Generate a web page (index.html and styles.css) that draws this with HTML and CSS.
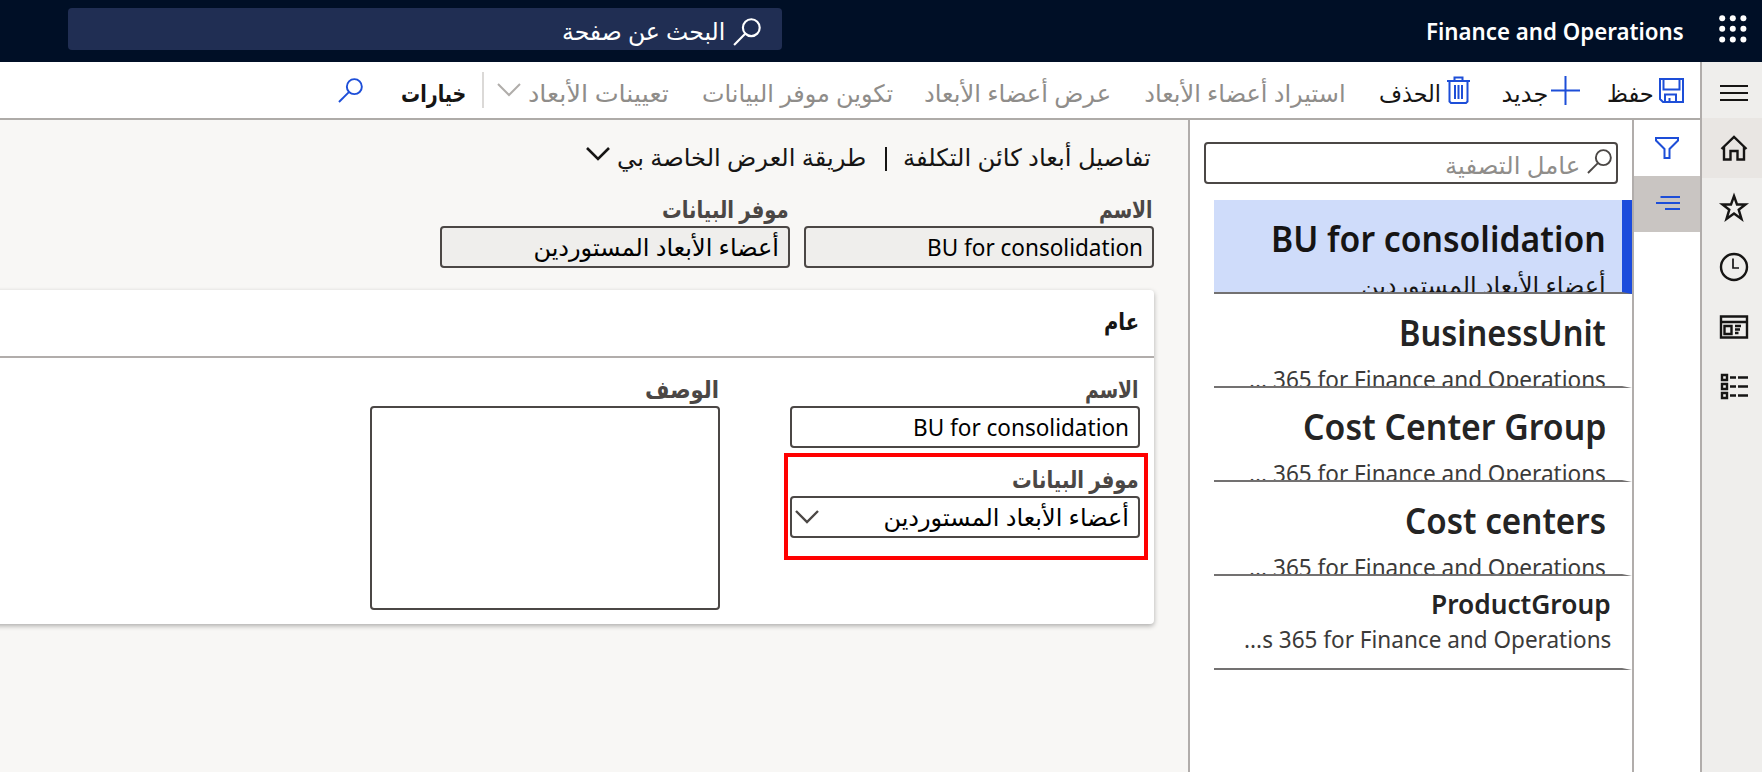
FILE: index.html
```
<!DOCTYPE html>
<html lang="ar" dir="rtl">
<head>
<meta charset="utf-8">
<title>Finance and Operations</title>
<link rel="stylesheet" href="styles.css">
</head>
<body>
<svg width="0" height="0" class="defs">
  <symbol id="search" viewBox="0 0 26 26"><circle cx="17" cy="9" r="7.8"/><path d="M11.3 14.7 1 25"/></symbol>
  <symbol id="chevron" viewBox="0 0 24 14"><path d="m1 1 11 11L23 1"/></symbol>
</svg>
<header class="topbar">
  <svg class="waffle" viewBox="0 0 28 28"><circle cx="3.2" cy="3.2" r="3"/><circle cx="13.8" cy="3.2" r="3"/><circle cx="24.4" cy="3.2" r="3"/><circle cx="3.2" cy="13.8" r="3"/><circle cx="13.8" cy="13.8" r="3"/><circle cx="24.4" cy="13.8" r="3"/><circle cx="3.2" cy="24.4" r="3"/><circle cx="13.8" cy="24.4" r="3"/><circle cx="24.4" cy="24.4" r="3"/></svg>
  <span class="brand" dir="ltr" data-fit="258">Finance and Operations</span>
  <div class="page-search"><svg class="ico s28"><use href="#search"/></svg><span data-fit="163">البحث عن صفحة</span></div>
</header>
<div class="shell">
  <nav class="rail">
    <div class="cell menu"><svg width="28" height="18" viewBox="0 0 28 18"><path d="M0 2h28M0 9h28M0 16h28"/></svg></div>
    <div class="cell home"><svg width="28" height="26" viewBox="0 0 28 26"><path d="M1.5 14 14 2l12.500 12M4 12v12.500h6.500V16h7v8.500H24V12"/></svg></div>
    <div class="cell"><svg width="28" height="29" viewBox="0 0 28 29"><path d="m14 3 3 8.500h8.500l-6.800 5.200L21.500 26 14 20.500 6.500 26l2.800-9.300L2.500 11.500H11z"/></svg></div>
    <div class="cell"><svg width="30" height="30" viewBox="0 0 30 30"><circle cx="15" cy="15" r="13"/><path class="thin" d="M14 6.500V16h6"/></svg></div>
    <div class="cell"><svg width="30" height="24" viewBox="0 0 30 24"><path d="M2 1.500h26v21H2zM2 7h26M5.500 11h7v8h-7zM16 11h6M16 14.500h5M16 18h3.500"/></svg></div>
    <div class="cell"><svg width="28" height="27" viewBox="0 0 28 27"><path d="M2 2h5v5H2zM2 11h5v5H2zM2 20h5v5H2zM10 4.500h6M18 4.500h10M10 13.500h6M18 13.500h10M10 22.500h6M18 22.500h10"/></svg></div>
  </nav>
  <div class="work">
    <div class="toolbar">
      <svg class="blue disk" width="25" height="25" viewBox="0 0 25 25"><path d="M1 1h23v23H4l-3-3zM4.500 1v10.500h16V1M6 24v-7.500h11V24M10.500 24v-4"/></svg>
      <span class="t-save" data-fit="47">حفظ</span>
      <svg class="blue plus" width="29" height="29" viewBox="0 0 29 29"><path d="M14.500 0v29M0 14.500h29"/></svg>
      <span class="t-new" data-fit="47">جديد</span>
      <svg class="blue trash" width="23" height="28" viewBox="0 0 23 28"><path d="M0 5h23M7.500 4V1.500h8V4M2.500 5v20.500l1.500 1.500h15l1.500-1.500V5M8 9v14M11.500 9v14M15 9v14"/></svg>
      <span class="t-del" data-fit="62">الحذف</span>
      <span class="off t-imp" data-fit="201">استيراد أعضاء الأبعاد</span>
      <span class="off t-view" data-fit="187">عرض أعضاء الأبعاد</span>
      <span class="off t-conf" data-fit="191">تكوين موفر البيانات</span>
      <span class="off t-map" data-fit="141">تعيينات الأبعاد</span>
      <svg class="chev off-chev"><use href="#chevron"/></svg>
      <i class="sep"></i>
      <span class="bold" data-fit="65">خيارات</span>
      <svg class="ico blue find"><use href="#search"/></svg>
    </div>
    <div class="body">
      <div class="tabs">
        <div class="tab"><svg class="blue" width="24" height="22" viewBox="0 0 24 22"><path d="M1 1h22v2.500L14.500 12v9h-5v-9L1 3.500z"/></svg></div>
        <div class="tab on"><svg class="blue" width="24" height="14" viewBox="0 0 24 14"><path d="M4.500 1H24M0 7h24M9 13h15"/></svg></div>
      </div>
      <aside class="panel">
        <div class="filter"><svg class="ico"><use href="#search"/></svg><span data-fit="135">عامل التصفية</span></div>
        <ul class="items">
          <li class="sel"><b dir="ltr" data-fit="335">BU for consolidation</b><span data-fit="245">أعضاء الأبعاد المستوردين</span></li>
          <li><b dir="ltr" data-fit="207">BusinessUnit</b><span dir="ltr" data-fit="357">... 365 for Finance and Operations</span></li>
          <li><b dir="ltr" data-fit="303">Cost Center Group</b><span dir="ltr" data-fit="357">... 365 for Finance and Operations</span></li>
          <li><b dir="ltr" data-fit="201">Cost centers</b><span dir="ltr" data-fit="357">... 365 for Finance and Operations</span></li>
          <li class="small"><b dir="ltr" data-fit="180">ProductGroup</b><span dir="ltr" data-fit="367">...s 365 for Finance and Operations</span></li>
        </ul>
      </aside>
      <main class="main">
        <div class="title"><span data-fit="248">تفاصيل أبعاد كائن التكلفة</span><i></i><span data-fit="249">طريقة العرض الخاصة بي</span><svg class="chev"><use href="#chevron"/></svg></div>
        <div class="head-fields">
          <div class="field"><label><span data-fit="54">الاسم</span></label><div class="box ro"><span dir="ltr" data-fit="216">BU for consolidation</span></div></div>
          <div class="field"><label><span data-fit="127">موفر البيانات</span></label><div class="box ro"><span data-fit="246">أعضاء الأبعاد المستوردين</span></div></div>
        </div>
        <section class="card">
          <h2><span data-fit="35">عام</span></h2>
          <div class="cols">
            <div class="col">
              <div class="field"><label><span data-fit="54">الاسم</span></label><div class="box"><span dir="ltr" data-fit="216">BU for consolidation</span></div></div>
              <div class="field marked"><label><span data-fit="127">موفر البيانات</span></label><div class="box combo"><span data-fit="246">أعضاء الأبعاد المستوردين</span><svg class="chev"><use href="#chevron"/></svg></div></div>
            </div>
            <div class="field"><label><span data-fit="74">الوصف</span></label><div class="box area"></div></div>
          </div>
        </section>
      </main>
    </div>
  </div>
</div>
<script src="main.js"></script>
</body>
</html>
```
FILE: styles.css
```
*{box-sizing:border-box}
body{margin:0;width:1762px;height:772px;overflow:hidden;font:24px/36px "Noto Sans","DejaVu Sans",sans-serif;color:#161514;background:#fff;display:flex;flex-direction:column}
svg{flex:none;fill:none;stroke:currentColor;stroke-width:2;overflow:visible}
.defs{position:absolute}
[data-fit]{display:inline-block;white-space:nowrap;flex:none;transform-origin:100% 50%}
.blue{color:#1d4ed8}
.ico{width:26px;height:26px}
.chev{width:24px;height:14px}

.topbar{height:62px;flex:none;background:#000f26;color:#fff;display:flex;align-items:flex-start;padding:8px 15px 0 0}
.waffle{width:28px;height:28px;fill:#fff;stroke:none;margin:7px 0 0 35px}
.brand{font-weight:600;margin-top:5px}
.page-search{width:714px;height:42px;border-radius:4px;background:#202e53;margin:0 auto 0 68px;display:flex;align-items:center;gap:8px;padding-right:21px}
.page-search span{margin-top:3px}
.page-search .s28{width:28px;height:28px;margin-top:5px}

.shell{flex:1;display:flex;min-height:0}
.rail{width:62px;flex:none;background:#efeeec;border-left:2px solid #b1adab}
.cell{height:59.700px;display:flex;align-items:center;justify-content:center;padding-left:4px}
.cell svg{stroke-width:2.400}
.cell .thin{stroke-width:1.700}
.menu{height:56px;padding-top:6px}
.menu svg{stroke-width:1.800}
.home{background:#e9e6e3}
.work{flex:1;min-width:0;display:flex;flex-direction:column}
.toolbar{height:58px;flex:none;border-bottom:2px solid #aeaba8;display:flex;align-items:center;padding-right:16px}
.toolbar [data-fit]{margin-top:5px}
.t-save{margin-right:5px}
.plus{margin-right:27px}
.t-new{margin-right:3px}
.trash{margin-right:32px}
.t-del{margin-right:6px}
.t-imp{margin-right:33px}
.t-view{margin-right:33px}
.t-conf{margin-right:31px}
.t-map{margin-right:33px}
.off{color:#8f8d8a}
.off-chev{color:#b0adaa;margin-right:7px}
.sep{width:2px;height:36px;background:#dbd9d7;margin:0 13px 0 16px}
.bold{font-weight:700}
.find{margin-right:38px;width:25px;height:25px}

.body{flex:1;display:flex;min-height:0}
.tabs{width:68px;flex:none;border-left:2px solid #b1adab}
.tab{height:56px;display:flex;align-items:center;justify-content:center}
.tab.on{background:#c9c5c2;padding:0 0 2px 2px}
.panel{width:444px;flex:none;border-left:2px solid #b1adab;padding:22px 0 0}
.filter{height:42px;width:414px;margin:0 14px 16px;border:2px solid #4b4745;border-radius:4px;display:flex;align-items:center;gap:7px;padding:0 4px;color:#8f8d8a}
.filter .ico{color:#4b4745;width:25px;height:25px;margin-bottom:4px}
.filter span{margin-top:3px}
.items{list-style:none;margin:0 0 0 24px;padding:0}
.items li{height:94px;border-bottom:2px solid #737171;border-right:10px solid transparent;overflow:hidden;display:flex;flex-direction:column;align-items:flex-start;padding:14px 16px 0 0;color:#3b3a39}
.items b{font-size:36px;line-height:50px;font-weight:600;color:#242424}
.items span{line-height:36px;margin-top:3px}
.items .sel{background:#cfdcfa;border-right-color:#1c4cdc;color:#161514}
.items .sel b{color:#161514}
.items .small{padding:10px 11px 0 0}
.items .small b{font-size:27px;line-height:36px}
.items .small span{margin-top:-1px}

.main{flex:1;min-width:0;background:#f8f7f5;padding:19px 34px 0 0}
.title{display:flex;height:36px;padding-right:3px;align-items:center}
.title i{width:2px;height:24px;background:#161514;margin:3px 16px 0 19px}
.title .chev{margin:-6px 7px 0 0;stroke-width:2.600}
.head-fields{display:flex;gap:14px;margin-top:16px}
.field{width:350px}
label{display:block;height:35px;padding-right:1px;font-weight:700;color:#4b4745}
.box{height:42px;border:2px solid #4b4745;border-radius:4px;padding:1px 9px 0;background:#fff;color:#000;display:flex}
.box.ro{background:#efeeec}
.combo{justify-content:space-between;padding-left:3px}
.combo .chev{color:#4b4745;margin-top:11px;stroke-width:2.400}
.area{height:204px}
.card{height:334px;background:#fff;margin:22px 0 0 -10px;border-radius:4px;box-shadow:0 2px 5px #0000004d}
h2{margin:0;height:68px;border-bottom:2px solid #b1adab;font-size:24px;line-height:36px;padding:13px 15px 0 0}
.cols{display:flex;padding:13px 14px 0 0;gap:70px}
.marked{width:356px;height:99px;outline:4px solid red;margin:9px -4px 0 0;padding:4px 4px 0 0}
.marked .box{width:350px}
.col{width:350px}
```
FILE: main.js
```
// Squeezes each label horizontally into the width it is given.
document.querySelectorAll('[data-fit]').forEach(el => {
  const target = Number(el.dataset.fit);
  const natural = el.offsetWidth;
  const gap = parseFloat(getComputedStyle(el).marginLeft) || 0;
  el.style.transform = `scaleX(${target / natural})`;
  el.style.marginLeft = `${gap + target - natural}px`;
});
```
